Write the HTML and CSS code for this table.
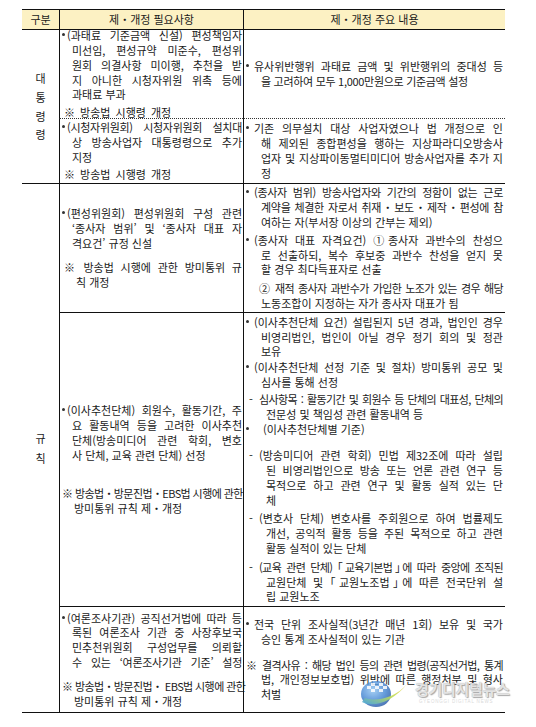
FILE: index.html
```html
<!DOCTYPE html>
<html lang="ko">
<head>
<meta charset="utf-8">
<title>제・개정 주요 내용</title>
<link rel="stylesheet" href="styles.css">
</head>
<body>
<div class="page">
  <div class="grid">
    <div class="cell h c1">구분</div>
    <div class="cell h c2 hc">제・개정 필요사항</div>
    <div class="cell h c3 hc">제・개정 주요 내용</div>

    <div class="cell k k1"><span>대</span><span>통</span><span>령</span><span>령</span></div>

    <div class="cell c2 dot">
      <div class="p">
        <div class="ln j"><span class="m m2"></span>(과태료 기준금액 신설) 편성책임자</div>
        <div class="ln j i2">미선임, 편성규약 미준수, 편성위</div>
        <div class="ln j i2">원회 의결사항 미이행, 추천을 받</div>
        <div class="ln j i2">지 아니한 시청자위원 위촉 등에</div>
        <div class="ln i2">과태료 부과</div>
      </div>
      <div class="p g3">
        <div class="ln n2">※ 방송법 시행령 개정</div>
      </div>
    </div>
    <div class="cell c3 dot">
      <div class="p">
        <div class="ln j"><span class="m m3"></span>유사위반행위 과태료 금액 및 위반행위의 중대성 등</div>
        <div class="ln i3 tight">을 고려하여 모두 1,000만원으로 기준금액 설정</div>
      </div>
    </div>

    <div class="cell c2">
      <div class="p">
        <div class="ln j tight"><span class="m m2"></span>(시청자위원회) 시청자위원회 설치대</div>
        <div class="ln j i2">상 방송사업자 대통령령으로 추가</div>
        <div class="ln i2">지정</div>
      </div>
      <div class="p g2">
        <div class="ln n2">※ 방송법 시행령 개정</div>
      </div>
    </div>
    <div class="cell c3">
      <div class="p">
        <div class="ln j"><span class="m m3"></span>기존 의무설치 대상 사업자였으나 법 개정으로 인</div>
        <div class="ln j i3">해 제외된 종합편성을 행하는 지상파라디오방송사</div>
        <div class="ln j i3">업자 및 지상파이동멀티미디어 방송사업자를 추가 지</div>
        <div class="ln i3">정</div>
      </div>
    </div>

    <div class="cell k k2"><span>규</span><span>칙</span></div>

    <div class="cell c2">
      <div class="p">
        <div class="ln j"><span class="m m2"></span>(편성위원회) 편성위원회 구성 관련</div>
        <div class="ln j i2">‘종사자 범위’ 및 ‘종사자 대표 자</div>
        <div class="ln i2">격요건’ 규정 신설</div>
      </div>
      <div class="p g10">
        <div class="ln j n2">※ 방송법 시행에 관한 방미통위 규</div>
        <div class="ln i2n">칙 개정</div>
      </div>
    </div>
    <div class="cell c3">
      <div class="p">
        <div class="ln j tight"><span class="m m3"></span>(종사자 범위) 방송사업자와 기간의 정함이 없는 근로</div>
        <div class="ln j i3 tight">계약을 체결한 자로서 취재・보도・제작・편성에 참</div>
        <div class="ln i3">여하는 자(부서장 이상의 간부는 제외)</div>
      </div>
      <div class="p g3">
        <div class="ln j"><span class="m m3"></span>(종사자 대표 자격요건) ①종사자 과반수의 찬성으</div>
        <div class="ln j i3">로 선출하되, 복수 후보중 과반수 찬성을 얻지 못</div>
        <div class="ln i3">할 경우 최다득표자로 선출</div>
      </div>
      <div class="p g4">
        <div class="ln j i3a tighter">② 재적 종사자 과반수가 가입한 노조가 있는 경우 해당</div>
        <div class="ln i3">노동조합이 지정하는 자가 종사자 대표가 됨</div>
      </div>
    </div>

    <div class="cell c2">
      <div class="p">
        <div class="ln j"><span class="m m2"></span>(이사추천단체) 회원수, 활동기간, 주</div>
        <div class="ln j i2">요 활동내역 등을 고려한 이사추천</div>
        <div class="ln j i2">단체(방송미디어 관련 학회, 변호</div>
        <div class="ln i2">사 단체, 교육 관련 단체) 선정</div>
      </div>
      <div class="p g24">
        <div class="ln j n2b tighter">※ 방송법・방문진법・EBS법 시행에 관한</div>
        <div class="ln i2m">방미통위 규칙 제・개정</div>
      </div>
    </div>
    <div class="cell c3">
      <div class="p">
        <div class="ln j"><span class="m m3"></span>(이사추천단체 요건) 설립된지 5년 경과, 법인인 경우</div>
        <div class="ln j i3">비영리법인, 법인이 아닐 경우 정기 회의 및 정관</div>
        <div class="ln i3">보유</div>
      </div>
      <div class="p g1">
        <div class="ln j"><span class="m m3"></span>(이사추천단체 선정 기준 및 절차) 방미통위 공모 및</div>
        <div class="ln i3">심사를 통해 선정</div>
      </div>
      <div class="p g2">
        <div class="ln j d3 tighter"><span class="m md">-</span>심사항목 : 활동기간 및 회원수 등 단체의 대표성, 단체의</div>
        <div class="ln i3d">전문성 및 책임성 관련 활동내역 등</div>
      </div>
      <div class="p g1">
        <div class="ln"><span class="m mb"></span>(이사추천단체별 기준)</div>
      </div>
      <div class="p g11">
        <div class="ln j d3"><span class="m md">-</span>(방송미디어 관련 학회) 민법 제32조에 따라 설립</div>
        <div class="ln j i3d">된 비영리법인으로 방송 또는 언론 관련 연구 등</div>
        <div class="ln j i3d">목적으로 하고 관련 연구 및 활동 실적 있는 단</div>
        <div class="ln i3d">체</div>
      </div>
      <div class="p g4">
        <div class="ln j d3"><span class="m md">-</span>(변호사 단체) 변호사를 주회원으로 하여 법률제도</div>
        <div class="ln j i3d">개선, 공익적 활동 등을 주된 목적으로 하고 관련</div>
        <div class="ln i3d">활동 실적이 있는 단체</div>
      </div>
      <div class="p g4">
        <div class="ln j d3 tighter"><span class="m md">-</span>(교육 관련 단체) <span class="br">「</span>교육기본법<span class="br">」</span>에 따라 중앙에 조직된</div>
        <div class="ln j i3d">교원단체 및 <span class="br">「</span>교원노조법<span class="br">」</span>에 따른 전국단위 설</div>
        <div class="ln i3d">립 교원노조</div>
      </div>
    </div>

    <div class="cell c2">
      <div class="p">
        <div class="ln j"><span class="m m2"></span>(여론조사기관) 공직선거법에 따라 등</div>
        <div class="ln j i2">록된 여론조사 기관 중 사장후보국</div>
        <div class="ln j i2">민추천위원회 구성업무를 의뢰할</div>
        <div class="ln j i2 tight">수 있는 ‘여론조사기관 기준’ 설정</div>
      </div>
      <div class="p g9">
        <div class="ln j n2b tighter">※ 방송법・방문진법・ EBS법 시행에 관한</div>
        <div class="ln i2m">방미통위 규칙 제・개정</div>
      </div>
    </div>
    <div class="cell c3">
      <div class="p">
        <div class="ln j"><span class="m m3"></span>전국 단위 조사실적(3년간 매년 1회) 보유 및 국가</div>
        <div class="ln i3">승인 통계 조사실적이 있는 기관</div>
      </div>
      <div class="p g11">
        <div class="ln j tighter"><span class="m mr">※</span>결격사유 : 해당 법인 등의 관련 법령(공직선거법, 통계</div>
        <div class="ln j i3">법, 개인정보보호법) 위반에 따른 행정처분 및 형사</div>
        <div class="ln i3">처벌</div>
      </div>
    </div>
  </div>

  <div class="wm" aria-hidden="true">
    <svg class="wm-globe" width="50" height="30" viewBox="0 0 50 30">
      <defs>
        <radialGradient id="gb" cx="0.4" cy="0.35" r="0.7">
          <stop offset="0" stop-color="#8fc4f2"/>
          <stop offset="0.6" stop-color="#3a7fd0"/>
          <stop offset="1" stop-color="#1d4f9e"/>
        </radialGradient>
        <linearGradient id="sw" x1="0" y1="1" x2="1" y2="0">
          <stop offset="0" stop-color="#3aa0e0"/>
          <stop offset="0.5" stop-color="#b7d94a"/>
          <stop offset="1" stop-color="#f3d23c"/>
        </linearGradient>
      </defs>
      <ellipse cx="17" cy="16" rx="15" ry="13" fill="url(#gb)" opacity="0.85"/>
      <g fill="#ffffff" opacity="0.85">
        <rect x="12" y="5" width="4" height="3"/>
        <rect x="20" y="5" width="4" height="3"/>
        <rect x="16" y="8" width="4" height="3"/>
        <rect x="24" y="8" width="4" height="3"/>
        <rect x="12" y="11" width="4" height="3"/>
        <rect x="20" y="11" width="4" height="3"/>
        <rect x="8" y="8" width="4" height="3"/>
      </g>
      <path d="M3 24 C 14 30, 34 24, 48 6 C 36 20, 18 24, 6 20 Z" fill="url(#sw)" opacity="0.9"/>
    </svg>
    <div class="wm-text">
      <div class="wm-name">경기디지털뉴스</div>
      <div class="wm-sub">GYEONGGI DIGITAL NEWS</div>
    </div>
  </div>
</div>
</body>
</html>
```

FILE: styles.css
```css
html, body {
  margin: 0;
  background: #ffffff;
}

body {
  font-family: "Noto Sans CJK KR", "Noto Sans", sans-serif;
  font-size: 11px;
  color: #1a1a1a;
}

.page {
  position: relative;
  padding: 9px 0 0 22px;
  height: 718px;
}

.grid {
  display: grid;
  width: 483px;
  grid-template-columns: 37px 184px 262px;
  grid-template-rows: 20px 89px 65px 129px 294px 106px;
  border-top: 1px solid #111111;
}

.cell {
  box-sizing: border-box;
  border-bottom: 1px solid #111111;
  display: flex;
  flex-direction: column;
  justify-content: center;
  min-width: 0;
}

.c2,
.c3 {
  border-left: 1px solid #111111;
}

.c2 {
  padding: 0 1px 0 2px;
}

.c3 {
  padding: 0 2px 0 2px;
}

.dot {
  border-bottom: 1px dotted #333333;
}

.h {
  background: #fcf1c3;
  align-items: center;
  text-align: center;
  font-size: 11px;
  line-height: 18px;
  padding-bottom: 1px;
}

.h.c2,
.h.c3 {
  padding-left: 0;
  padding-right: 0;
}

.k {
  align-items: center;
  text-align: center;
}

.k span {
  display: block;
}

.k1 {
  grid-column: 1;
  grid-row: 2 / 4;
  line-height: 18.7px;
}

.k2 {
  grid-column: 1;
  grid-row: 4 / 7;
  line-height: 20px;
}

.ln {
  line-height: 14.8px;
  height: 14.8px;
  white-space: nowrap;
  overflow: visible;
}

.j {
  text-align: justify;
  text-align-last: justify;
}

.tight {
  letter-spacing: -0.3px;
}

.tighter {
  letter-spacing: -0.6px;
}

.br {
  font-feature-settings: "halt" 1;
}

/* indents in the middle column */
.i2 {
  margin-left: 10px;
}

.n2 {
  margin-left: 2px;
  word-spacing: 2px;
}

.n2b {
  margin-left: 0;
}

.i2n {
  margin-left: 14px;
}

.i2m {
  margin-left: 12px;
}

/* indents in the right column */
.i3 {
  margin-left: 15px;
}

.i3a {
  margin-left: 13px;
}

.d3 {
  margin-left: 3px;
}

.i3d {
  margin-left: 20px;
}

/* paragraph gaps */
.g1 { margin-top: 1px; }
.g2 { margin-top: 2px; }
.g3 { margin-top: 3px; }
.g4 { margin-top: 4px; }
.g9 { margin-top: 9px; }
.g10 { margin-top: 10px; }
.g11 { margin-top: 11px; }
.g24 { margin-top: 24px; }

/* markers */
.m {
  display: inline-block;
  text-align: left;
  vertical-align: top;
  height: 14.8px;
  position: relative;
  letter-spacing: 0;
}

.m2,
.m3,
.mb {
  width: 5px;
}

.m3 {
  width: 8px;
}

.mb {
  width: 17px;
}

.m2::before,
.m3::before,
.mb::before {
  content: "";
  position: absolute;
  left: 0;
  top: 5px;
  width: 3px;
  height: 3px;
  border-radius: 50%;
  background: #333333;
}

.md {
  width: 10px;
}

.mr {
  width: 16px;
}

/* watermark overlay */
.wm {
  position: absolute;
  left: 359px;
  top: 678px;
  display: flex;
  align-items: flex-start;
  gap: 6px;
  opacity: 0.92;
}

.wm-globe {
  display: block;
}

.wm-text {
  padding-top: 3px;
}

.wm-name {
  font-family: "Noto Sans CJK KR", sans-serif;
  font-weight: 700;
  font-size: 15px;
  line-height: 16px;
  color: rgba(235, 235, 235, 0.9);
  letter-spacing: -0.3px;
  text-shadow: 0 0 1px #9a9a9a, 1px 1px 1px rgba(120, 120, 120, 0.7);
}

.wm-sub {
  font-family: "Liberation Sans", sans-serif;
  font-size: 4.5px;
  line-height: 6px;
  letter-spacing: 0.8px;
  color: #d8d8d8;
  margin-left: 4px;
  margin-top: 2px;
}
```
